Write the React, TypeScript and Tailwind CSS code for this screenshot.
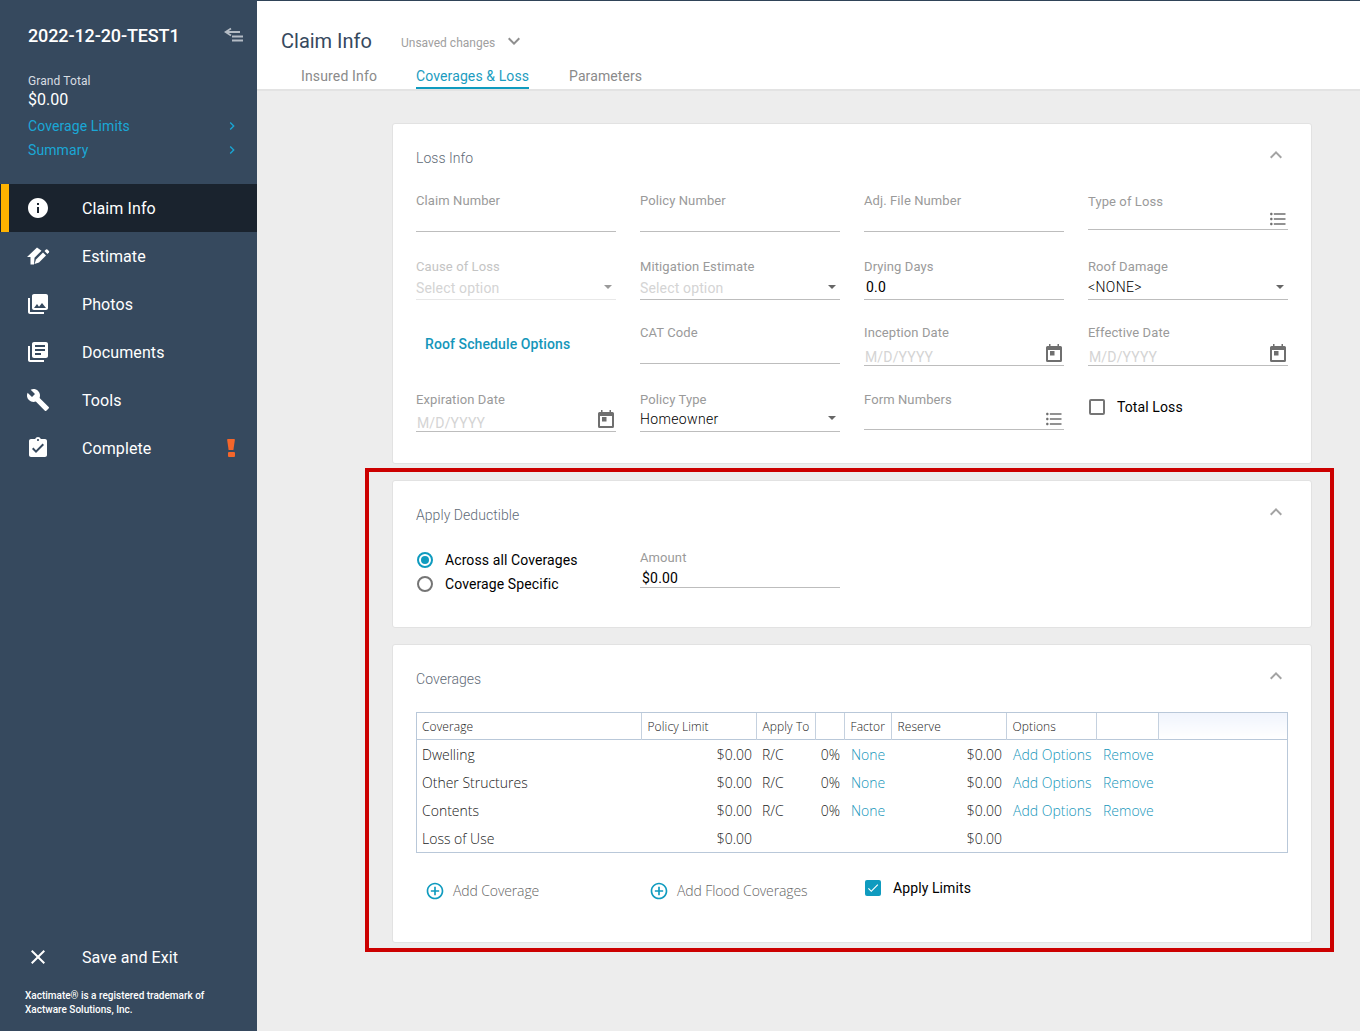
import type { ReactNode } from "react";
import {
  MdAddCircleOutline,
  MdAssignmentTurnedIn,
  MdBuild,
  MdCheck,
  MdChevronRight,
  MdClose,
  MdExpandLess,
  MdExpandMore,
  MdFormatListBulleted,
  MdInfo,
  MdLibraryBooks,
  MdPhotoLibrary,
} from "react-icons/md";

function EstimateIcon() {
  return (
    <svg width="24" height="24" viewBox="0 0 24 24" fill="currentColor">
      <path d="M1 13 11 3.500l4.500 3.200-7 7-.5 6.800H4.500V13z" />
      <path d="M10 15.500 17 8.500l3 3-7 7-4.500 1.500z" />
      <path d="M18.500 7 20 5.500a1 1 0 0 1 1.400 0l1.500 1.500a1 1 0 0 1 0 1.400l-1.500 1.500z" />
    </svg>
  );
}

function CalendarIcon({ className }: { className: string }) {
  return (
    <svg className={className} width="16" height="18" viewBox="0 0 16 18" fill="currentColor">
      <path d="M3 0h1.500v2h7V0H13v2h1.500A1.500 1.500 0 0 1 16 3.500v13a1.500 1.500 0 0 1-1.500 1.500h-13A1.500 1.500 0 0 1 0 16.500v-13A1.500 1.500 0 0 1 1.500 2H3zM2 6v10h12V6z" fillRule="evenodd" />
      <rect x="4" y="7" width="4.500" height="4.500" />
    </svg>
  );
}

function NavItem({ icon, label, active, alert }: { icon: ReactNode; label: string; active?: boolean; alert?: boolean }) {
  return (
    <div className={`relative flex h-12 items-center pl-[26px] text-white ${active ? "bg-[#1a232e]" : ""}`}>
      {active && <span className="absolute left-[1px] top-0 h-full w-2 bg-[#ffb300]" />}
      <span className="flex w-6 justify-center text-[24px]">{icon}</span>
      <span className="ml-8 translate-y-[1px] text-[16px] tracking-[0.1px]">{label}</span>
      {alert && (
        <span className="absolute left-[227px] top-[15px] flex flex-col items-center gap-[2px]">
          <span className="h-[11px] w-2 rounded-[1px] bg-[#f4662b] [clip-path:polygon(0_0,100%_0,80%_100%,20%_100%)]" />
          <span className="h-[5px] w-[7px] rounded-[1px] bg-[#f4662b]" />
        </span>
      )}
    </div>
  );
}

function Sidebar() {
  return (
    <aside className="flex w-[257px] shrink-0 flex-col bg-[#36495e] text-white">
      <div className="flex h-[36px] items-end pl-7 pr-[13px]">
        <span className="translate-y-[12px] text-[18px] font-medium leading-[24px] tracking-[-0.12px]">2022-12-20-TEST1</span>
        <svg className="ml-auto translate-y-[7px] text-[#b4bcc5]" width="20" height="16" viewBox="0 0 20 16" fill="none" stroke="currentColor" strokeWidth="2">
          <path d="M7 1.500 1.500 5 7 8.500" strokeWidth="1.800" />
          <path d="M2 5h14M8 9.500h11M8 13.500h11" />
        </svg>
      </div>
      <div className="mt-[37px] pl-7 pr-[17px]">
        <div className="text-[12px] leading-[16px] tracking-[0.1px] text-[#d8dde2]">Grand Total</div>
        <div className="text-[16px] leading-[22px]">$0.00</div>
        <div className="mt-[3px] flex h-6 items-center justify-between text-[14px] tracking-[0.1px] text-[#1aa7d6]">
          Coverage Limits
          <MdChevronRight className="text-[16px]" />
        </div>
        <div className="flex h-6 items-center justify-between text-[14px] tracking-[0.1px] text-[#1aa7d6]">
          Summary
          <MdChevronRight className="text-[16px]" />
        </div>
      </div>
      <nav className="mt-[22px]">
        <NavItem active label="Claim Info" icon={<MdInfo />} />
        <NavItem label="Estimate" icon={<EstimateIcon />} />
        <NavItem label="Photos" icon={<MdPhotoLibrary />} />
        <NavItem label="Documents" icon={<MdLibraryBooks />} />
        <NavItem label="Tools" icon={<MdBuild />} />
        <NavItem label="Complete" icon={<MdAssignmentTurnedIn />} alert />
      </nav>
      <div className="mt-auto">
        <NavItem label="Save and Exit" icon={<MdClose />} />
        <p className="mb-[14px] mt-[8px] pl-[25px] text-[10px] font-medium leading-[14px]">
          Xactimate® is a registered trademark of
          <br />
          Xactware Solutions, Inc.
        </p>
      </div>
    </aside>
  );
}

function Card({ title, children, className }: { title: string; children: ReactNode; className: string }) {
  return (
    <section className={`relative rounded-[3px] border border-[#e2e2e2] bg-white px-[23px] pt-6 ${className}`}>
      <h2 className="text-[14px] font-light leading-[20px] tracking-[0.05px] text-[#5f6b77]">{title}</h2>
      <MdExpandLess className="absolute right-[23px] top-[19px] text-[24px] text-[#a3a3a3]" />
      {children}
    </section>
  );
}

function Field({
  label,
  value,
  placeholder,
  icon,
  disabled,
  indent,
  lineAt = 40,
  valueTop = 19,
  holderTop = 21,
  iconTop = 18,
  labelTop = 0,
}: {
  label: string;
  value?: string;
  placeholder?: string;
  icon?: "list" | "date" | "select";
  disabled?: boolean;
  indent?: boolean;
  lineAt?: number;
  valueTop?: number;
  holderTop?: number;
  iconTop?: number;
  labelTop?: number;
}) {
  return (
    <div className="relative">
      <div
        className={`relative text-[13px] leading-[20px] tracking-[0.1px] ${disabled ? "text-[#c4c4c4]" : "text-[#9a9a9a]"}`}
        style={{ top: labelTop }}
      >
        {label}
      </div>
      <div
        className={`absolute inset-x-0 top-0 border-b ${disabled ? "border-[#e8e8e8]" : "border-[#bdbdbd]"}`}
        style={{ height: lineAt + 1 }}
      />
      {value && (
        <div
          className={`absolute text-[14px] leading-[20px] text-black ${indent ? "left-[2px] tracking-[0.2px]" : "left-0 font-light tracking-[0.35px]"}`}
          style={{ top: valueTop }}
        >
          {value}
        </div>
      )}
      {placeholder && (
        <div className={`absolute text-[14px] leading-[20px] tracking-[0.15px] text-[#d4d4d4] ${icon === "date" ? "left-[1px]" : "left-0"}`} style={{ top: holderTop }}>
          {placeholder}
        </div>
      )}
      {icon === "select" && (
        <span
          className={`absolute right-[4px] h-0 w-0 border-x-[4px] border-t-[4px] border-x-transparent ${disabled ? "border-t-[#9a9a9a]" : "border-t-[#666666]"}`}
          style={{ top: iconTop }}
        />
      )}
      {icon === "date" && (
        <span className="absolute right-[2px]" style={{ top: iconTop }}>
          <CalendarIcon className="text-[#6f6f6f]" />
        </span>
      )}
      {icon === "list" && (
        <span className="absolute right-0 text-[20px] text-[#6f6f6f]" style={{ top: iconTop }}>
          <MdFormatListBulleted />
        </span>
      )}
    </div>
  );
}

const rows = [
  { name: "Dwelling", apply: "R/C", full: true },
  { name: "Other Structures", apply: "R/C", full: true },
  { name: "Contents", apply: "R/C", full: true },
  { name: "Loss of Use", apply: "", full: false },
];

const headers: [string, number][] = [
  ["Coverage", 224],
  ["Policy Limit", 115],
  ["Apply To", 59],
  ["", 29],
  ["Factor", 47],
  ["Reserve", 115],
  ["Options", 90],
  ["", 62],
];

function CoverageTable() {
  return (
    <div className="mt-[23px] border border-[#b9c8d9] font-['Open_Sans',sans-serif]">
      <table className="w-full table-fixed border-collapse">
        <colgroup>
          {headers.map(([, w], i) => (
            <col key={i} style={{ width: w }} />
          ))}
          <col />
        </colgroup>
        <thead>
          <tr className="h-[26px] border-b border-[#b9c8d9]">
            {headers.map(([h], i) => (
              <th key={i} className="border-r border-[#c5d1df] pl-[6px] pt-[2px] text-left text-[12px] font-light tracking-[0.1px] text-[#222222] first:pl-[5px]">
                {h}
              </th>
            ))}
            <th className="bg-gradient-to-b from-[#f0f4fc] to-white" />
          </tr>
        </thead>
        <tbody className="text-[14px] font-light text-[#222222]">
          {rows.map((r, i) => (
            <tr key={r.name} className={i === 0 ? "h-[29px] [&>td]:pt-[2px]" : "h-[28px]"}>
              <td className="pl-[5px]">{r.name}</td>
              <td className="pr-[4px] text-right">$0.00</td>
              <td className="pl-[6px]">{r.apply}</td>
              <td className="pr-[4px] text-right">{r.full && "0%"}</td>
              <td className="pl-[7px] text-[#1596ba]">{r.full && "None"}</td>
              <td className="pr-[4px] text-right">$0.00</td>
              <td className="whitespace-nowrap pl-[7px] text-[#1596ba]">{r.full && "Add Options"}</td>
              <td className="pl-[7px] text-[#1596ba]">{r.full && "Remove"}</td>
              <td />
            </tr>
          ))}
        </tbody>
      </table>
    </div>
  );
}

function AddLink({ label, className }: { label: string; className: string }) {
  return (
    <div className={`flex items-center font-['Open_Sans',sans-serif] text-[14px] font-light tracking-[-0.12px] text-[#666666] ${className}`}>
      <MdAddCircleOutline className="text-[20px] text-[#0f9bbf]" />
      <span className="ml-[8px]">{label}</span>
    </div>
  );
}

export default function App() {
  return (
    <div className="relative flex h-[1031px] w-[1360px] overflow-hidden bg-[#ededed] font-['Roboto',sans-serif]">
      <Sidebar />
      <main className="flex min-w-0 flex-1 flex-col">
        <header className="h-[91px] border-t border-b-2 border-t-[#2f4358] border-b-[#e3e3e3] bg-white pl-6">
          <div className="flex h-[50px] items-end">
            <h1 className="translate-y-[4px] text-[20px] font-normal leading-[28px] text-[#36495e]">Claim Info</h1>
            <span className="ml-[29px] translate-y-[2px] text-[12px] leading-[20px] text-[#a0a0a0]">Unsaved changes</span>
            <MdExpandMore className="ml-[7px] translate-y-[2px] text-[24px] text-[#8f8f8f]" />
          </div>
          <div className="flex pl-[20px] text-[14px] leading-[20px] text-[#8a8a8a]">
            <span className="mt-[15px] tracking-[0.15px]">Insured Info</span>
            <span className="ml-[39px] mt-[15px] h-[23px] border-b-2 border-[#0f9bbf] tracking-[0.1px] text-[#1b9cc0]">Coverages &amp; Loss</span>
            <span className="ml-[40px] mt-[15px] tracking-[0.1px]">Parameters</span>
          </div>
        </header>

        <div className="flex flex-col pl-[135px] pr-[48px] pt-[32px]">
          <Card title="Loss Info" className="h-[341px]">
            <div className="mt-[23px] grid grid-cols-4 grid-rows-[66px_66px_67px_66px] gap-x-6">
              <Field label="Claim Number" />
              <Field label="Policy Number" />
              <Field label="Adj. File Number" />
              <Field label="Type of Loss" icon="list" lineAt={38} labelTop={1} />
              <Field label="Cause of Loss" placeholder="Select option" icon="select" disabled lineAt={42} iconTop={28} />
              <Field label="Mitigation Estimate" placeholder="Select option" icon="select" lineAt={42} iconTop={28} />
              <Field label="Drying Days" value="0.0" indent lineAt={42} valueTop={20} />
              <Field label="Roof Damage" value="<NONE>" icon="select" lineAt={42} valueTop={20} iconTop={28} />
              <div className="pl-[9px] pt-[11px] text-[14px] font-medium leading-[20px] tracking-[0.1px] text-[#1596ba]">Roof Schedule Options</div>
              <Field label="CAT Code" />
              <Field label="Inception Date" placeholder="M/D/YYYY" icon="date" lineAt={42} holderTop={24} iconTop={21} />
              <Field label="Effective Date" placeholder="M/D/YYYY" icon="date" lineAt={42} holderTop={24} iconTop={21} />
              <Field label="Expiration Date" placeholder="M/D/YYYY" icon="date" lineAt={41} holderTop={23} iconTop={20} />
              <Field label="Policy Type" value="Homeowner" icon="select" lineAt={41} iconTop={26} />
              <Field label="Form Numbers" icon="list" lineAt={39} iconTop={19} />
              <label className="flex items-start pl-[1px] pt-[7px] text-[14px] leading-[20px] tracking-[0.1px] text-black">
                <span className="mt-[2px] h-[16px] w-[16px] rounded-[2px] border-2 border-[#757575]" />
                <span className="ml-[12px]">Total Loss</span>
              </label>
            </div>
          </Card>

          <Card title="Apply Deductible" className="mt-[16px] h-[148px]">
            <div className="mt-[23px] grid grid-cols-4 gap-x-6">
              <div className="pl-[1px] text-[14px] leading-[24px] tracking-[0.1px] text-black">
                <div className="flex items-center">
                  <span className="flex h-4 w-4 items-center justify-center rounded-full border-2 border-[#0f9bbf]">
                    <span className="h-2 w-2 rounded-full bg-[#0f9bbf]" />
                  </span>
                  <span className="ml-[12px]">Across all Coverages</span>
                </div>
                <div className="flex items-center">
                  <span className="h-4 w-4 rounded-full border-2 border-[#757575]" />
                  <span className="ml-[12px]">Coverage Specific</span>
                </div>
              </div>
              <Field label="Amount" value="$0.00" indent lineAt={39} valueTop={20} />
            </div>
          </Card>

          <Card title="Coverages" className="mt-[16px] h-[299px]">
            <CoverageTable />
            <div className="relative h-[40px]">
              <AddLink label="Add Coverage" className="absolute left-[9px] top-[27px]" />
              <AddLink label="Add Flood Coverages" className="absolute left-[233px] top-[27px]" />
              <div className="absolute left-[449px] top-[25px] flex items-center text-[14px] leading-[20px] tracking-[0.1px] text-black">
                <span className="flex h-4 w-4 items-center justify-center rounded-[2px] bg-[#0f9bbf] text-white">
                  <MdCheck className="text-[14px]" />
                </span>
                <span className="ml-[12px]">Apply Limits</span>
              </div>
            </div>
          </Card>
        </div>
      </main>
      {/* red highlight drawn over the screenshot */}
      <div className="pointer-events-none absolute left-[365px] top-[468px] h-[484px] w-[969px] border-4 border-[#cc0000]" />
    </div>
  );
}
